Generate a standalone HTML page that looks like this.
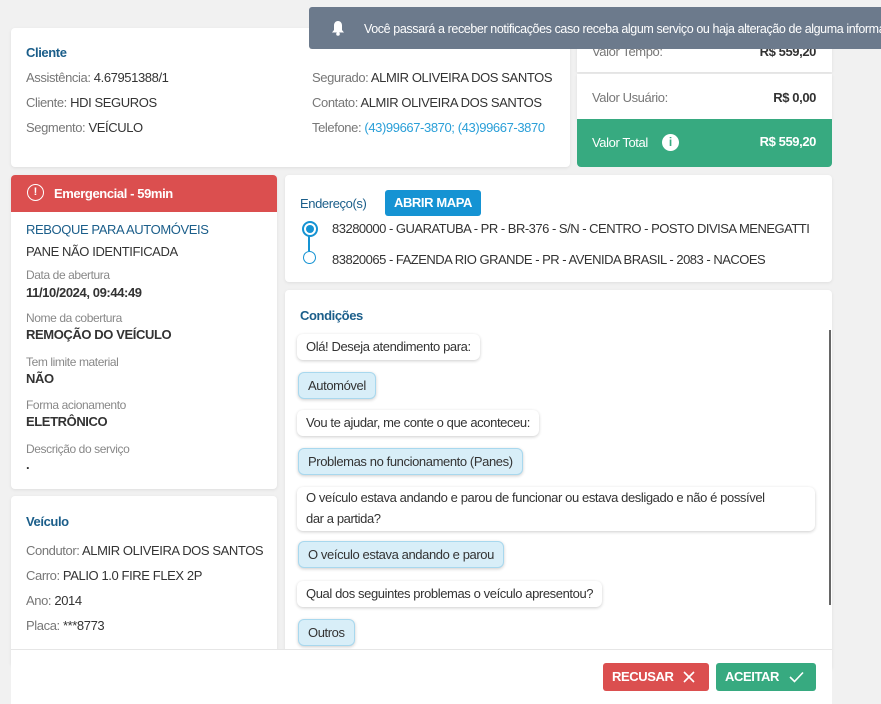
<!DOCTYPE html><html><head><meta charset="utf-8"><style>
body{margin:0;width:881px;height:703px;background:#f1f1f1;font-family:"Liberation Sans",sans-serif;font-size:13px;letter-spacing:-0.4px;color:#333;position:relative;overflow:hidden}
.a{position:absolute}
.card{position:absolute;background:#fff;border-radius:4px;box-shadow:0 1px 3px rgba(0,0,0,.08)}
.t{color:#1b5e8a;font-weight:bold;font-size:13px}
.g{color:#777}
.lbl{color:#888;font-size:12px}
.val{font-weight:bold;color:#333}
.b{position:absolute;left:12px;padding:0 9px;height:26px;line-height:26px;border-radius:6px;background:#fff;box-shadow:0 1px 3px rgba(0,0,0,.2);white-space:nowrap}
.b.s{background:#d8eef8;border:1px solid #a8d8ee;height:25px;line-height:25px;left:13px}
</style></head><body>
<div class="card" style="left:11px;top:28px;width:559px;height:139px">
<div class="a t" style="left:15px;top:17px">Cliente</div>
<div class="a" style="left:15px;top:42px"><span class="g">Assistência:</span> 4.67951388/1</div>
<div class="a" style="left:15px;top:67px"><span class="g">Cliente:</span> HDI SEGUROS</div>
<div class="a" style="left:15px;top:92px"><span class="g">Segmento:</span> VEÍCULO</div>
<div class="a" style="left:301px;top:42px"><span class="g">Segurado:</span> ALMIR OLIVEIRA DOS SANTOS</div>
<div class="a" style="left:301px;top:67px"><span class="g">Contato:</span> ALMIR OLIVEIRA DOS SANTOS</div>
<div class="a" style="left:301px;top:92px"><span class="g">Telefone:</span> <span style="color:#2a9fd8">(43)99667-3870; (43)99667-3870</span></div>
</div>
<div class="card" style="left:577px;top:28px;width:255px;height:44px;border-radius:0">
<div class="a g" style="left:15px;top:16px">Valor Tempo:</div><div class="a val" style="right:16px;top:16px">R$ 559,20</div></div>
<div class="card" style="left:577px;top:74px;width:255px;height:45px;border-radius:0">
<div class="a g" style="left:15px;top:16px">Valor Usuário:</div><div class="a val" style="right:16px;top:16px">R$ 0,00</div></div>
<div class="a" style="left:577px;top:119px;width:255px;height:48px;background:#37aa80;border-radius:0 0 4px 4px;color:#fff">
<div class="a" style="left:15px;top:16px">Valor Total</div>
<div class="a" style="left:85px;top:15px;width:17px;height:17px;border-radius:50%;background:#fff;color:#37aa80;font-weight:bold;text-align:center;line-height:17px;font-size:12px;letter-spacing:0">i</div>
<div class="a" style="right:16px;top:15px;font-weight:bold">R$ 559,20</div></div>
<div class="a" style="left:309px;top:7px;width:580px;height:42px;background:#6c7a8c;border-radius:3px;color:#fff;font-size:12.5px;white-space:nowrap">
<svg class="a" style="left:22px;top:13px" width="14" height="16" viewBox="0 0 14 16"><path d="M7 1C4.5 1 3 3 3 5.5V10L1 12.5H13L11 10V5.5C11 3 9.5 1 7 1Z" fill="#fff"/><circle cx="7" cy="14" r="1.8" fill="#fff"/></svg>
<div class="a" style="left:55px;top:15px">Você passará a receber notificações caso receba algum serviço ou haja alteração de alguma informação</div></div>
<div class="card" style="left:11px;top:175px;width:266px;height:314px">
<div class="a" style="left:0;top:0;width:266px;height:37px;background:#db4f4f;border-radius:4px 4px 0 0;color:#fff;font-weight:bold">
<div class="a" style="left:16px;top:9px;width:15px;height:15px;border:1.5px solid #fff;border-radius:50%;text-align:center;font-size:11px;line-height:15px;letter-spacing:0">!</div>
<div class="a" style="left:43px;top:11px">Emergencial - 59min</div></div>
<div class="a t" style="left:15px;top:47px;font-weight:normal">REBOQUE PARA AUTOMÓVEIS</div>
<div class="a" style="left:15px;top:69px">PANE NÃO IDENTIFICADA</div>
<div class="a lbl" style="left:15px;top:93px">Data de abertura</div><div class="a val" style="left:15px;top:110px">11/10/2024, 09:44:49</div>
<div class="a lbl" style="left:15px;top:136px">Nome da cobertura</div><div class="a val" style="left:15px;top:152px">REMOÇÃO DO VEÍCULO</div>
<div class="a lbl" style="left:15px;top:180px">Tem limite material</div><div class="a val" style="left:15px;top:196px">NÃO</div>
<div class="a lbl" style="left:15px;top:223px">Forma acionamento</div><div class="a val" style="left:15px;top:239px">ELETRÔNICO</div>
<div class="a lbl" style="left:15px;top:267px">Descrição do serviço</div><div class="a val" style="left:15px;top:282px">.</div>
</div>
<div class="card" style="left:11px;top:496px;width:266px;height:170px">
<div class="a t" style="left:15px;top:18px">Veículo</div>
<div class="a" style="left:15px;top:47px"><span class="g">Condutor:</span> ALMIR OLIVEIRA DOS SANTOS</div>
<div class="a" style="left:15px;top:72px"><span class="g">Carro:</span> PALIO 1.0 FIRE FLEX 2P</div>
<div class="a" style="left:15px;top:97px"><span class="g">Ano:</span> 2014</div>
<div class="a" style="left:15px;top:122px"><span class="g">Placa:</span> ***8773</div>
</div>
<div class="card" style="left:285px;top:175px;width:547px;height:107px">
<div class="a t" style="left:15px;top:21px;font-weight:normal">Endereço(s)</div>
<div class="a" style="left:100px;top:15px;width:96px;height:26px;background:#1593d3;border-radius:3px;color:#fff;font-weight:bold;text-align:center;line-height:26px">ABRIR MAPA</div>
<div class="a" style="left:17px;top:46px;width:12px;height:12px;border:2px solid #1593d3;border-radius:50%"></div>
<div class="a" style="left:21px;top:50px;width:8px;height:8px;background:#1593d3;border-radius:50%"></div>
<div class="a" style="left:23px;top:60px;width:2px;height:16px;background:#1593d3"></div>
<div class="a" style="left:18px;top:76px;width:11px;height:11px;border:1.5px solid #1593d3;border-radius:50%"></div>
<div class="a" style="left:47px;top:46px;letter-spacing:-0.5px">83280000 - GUARATUBA - PR - BR-376 - S/N - CENTRO - POSTO DIVISA MENEGATTI</div>
<div class="a" style="left:47px;top:77px;letter-spacing:-0.5px">83820065 - FAZENDA RIO GRANDE - PR - AVENIDA BRASIL - 2083 - NACOES</div>
</div>
<div class="card" style="left:285px;top:290px;width:547px;height:380px">
<div class="a t" style="left:15px;top:18px">Condições</div>
<div class="a" style="left:544px;top:40px;width:2px;height:275px;background:#666"></div>
<div class="b" style="top:44px">Olá! Deseja atendimento para:</div>
<div class="b s" style="top:82px">Automóvel</div>
<div class="b" style="top:120px">Vou te ajudar, me conte o que aconteceu:</div>
<div class="b s" style="top:158px">Problemas no funcionamento (Panes)</div>
<div class="b" style="top:197px;height:44px;line-height:21px;white-space:normal;width:472px;padding-right:37px">O veículo estava andando e parou de funcionar ou estava desligado e não é possível dar a partida?</div>
<div class="b s" style="top:251px">O veículo estava andando e parou</div>
<div class="b" style="top:291px">Qual dos seguintes problemas o veículo apresentou?</div>
<div class="b s" style="top:329px">Outros</div>
</div>
<div class="a" style="left:11px;top:649px;width:821px;height:54px;background:#fff;border-top:1px solid #e6e6e6">
<div class="a" style="left:592px;top:13px;width:106px;height:28px;background:#db4f4f;border-radius:3px;color:#fff;font-weight:bold;line-height:28px">
<span class="a" style="left:9px">RECUSAR</span>
<svg class="a" style="left:80px;top:8px" width="12" height="12"><path d="M1 1L11 11M11 1L1 11" stroke="#fff" stroke-width="1.6"/></svg></div>
<div class="a" style="left:705px;top:13px;width:100px;height:28px;background:#37aa80;border-radius:3px;color:#fff;font-weight:bold;line-height:28px">
<span class="a" style="left:9px">ACEITAR</span>
<svg class="a" style="left:73px;top:8px" width="15" height="12"><path d="M1 6L5.5 10.5L14 1.5" stroke="#fff" stroke-width="1.6" fill="none"/></svg></div>
</div>
</body></html>
